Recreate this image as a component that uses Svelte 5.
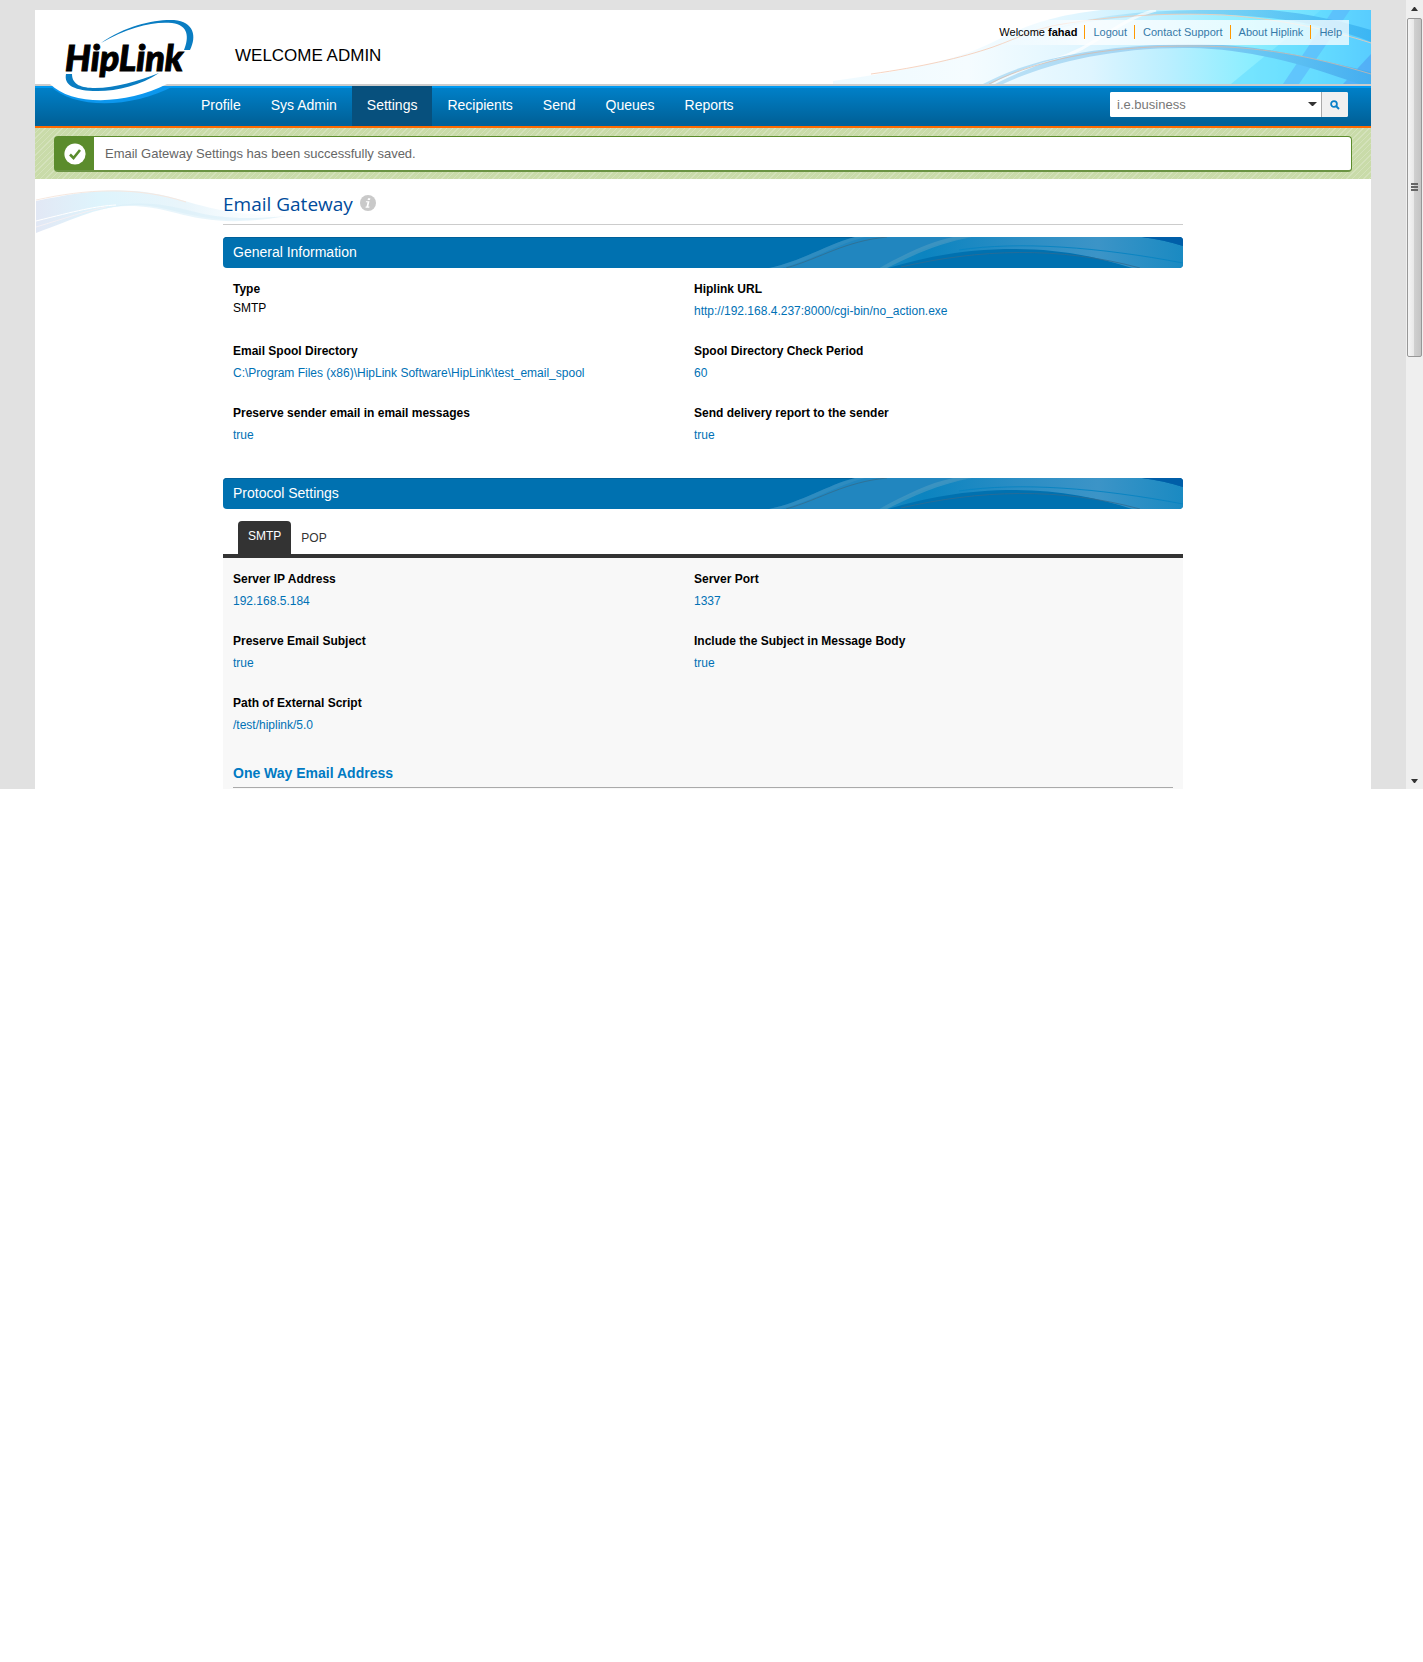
<script>
  const nav = ['Profile', 'Sys Admin', 'Settings', 'Recipients', 'Send', 'Queues', 'Reports'];
  const links = ['Logout', 'Contact Support', 'About Hiplink', 'Help'];
  const general = [
    { label: 'Type', value: 'SMTP', plain: true },
    { label: 'Hiplink URL', value: 'http://192.168.4.237:8000/cgi-bin/no_action.exe' },
    { label: 'Email Spool Directory', value: 'C:\\Program Files (x86)\\HipLink Software\\HipLink\\test_email_spool' },
    { label: 'Spool Directory Check Period', value: '60' },
    { label: 'Preserve sender email in email messages', value: 'true' },
    { label: 'Send delivery report to the sender', value: 'true' }
  ];
  const smtp = [
    { label: 'Server IP Address', value: '192.168.5.184' },
    { label: 'Server Port', value: '1337' },
    { label: 'Preserve Email Subject', value: 'true' },
    { label: 'Include the Subject in Message Body', value: 'true' },
    { label: 'Path of External Script', value: '/test/hiplink/5.0' }
  ];
</script>

{#snippet fields(items)}
  <dl class="fields">
    {#each items as f}
      <div class="field">
        <dt>{f.label}</dt>
        <dd class:plain={f.plain}>{f.value}</dd>
      </div>
    {/each}
  </dl>
{/snippet}

{#snippet bar(title)}
  <h2 class="bar">
    <svg class="bar-art" viewBox="0 0 414 31" preserveAspectRatio="none" aria-hidden="true">
      <defs>
        <linearGradient id="ribbon">
          <stop offset="0" stop-color="#1787c0" />
          <stop offset=".15" stop-color="#0b84c0" />
          <stop offset=".45" stop-color="#2a8dc4" />
          <stop offset=".72" stop-color="#3c94c7" />
          <stop offset="1" stop-color="#1a8ac2" />
        </linearGradient>
      </defs>
      <path d="M0 31C34 24 58 7 86 0H201C166 6 140 18 110 31Z" fill="#2186bf" />
      <path d="M110 31C140 16 170 5 201 0H373C388 2 402 5 414 9V31H363C330 20 290 12 246 12C195 12 156 20 119 31Z" fill="url(#ribbon)" />
      <path d="M110 31C138 16 160 5 184 0H203C170 6 142 19 118 31Z" fill="#4798c2" opacity=".7" />
      <path d="M0 31C34 24 58 7 86 0H96C66 8 42 24 12 31Z" fill="#4395c2" opacity=".4" />
      <path d="M17 31C52 21 76 4 118 0" fill="none" stroke="#2f7297" />
      <path d="M132 30C210 12 290 9 371 31" fill="none" stroke="#2f6b92" opacity=".8" />
      <path d="M190 13C250 4 330 10 414 26" fill="none" stroke="#0a84c2" />
      <path d="M373 0C388 2 402 5 414 9V0Z" fill="#005ea8" />
    </svg>
    <span>{title}</span>
  </h2>
{/snippet}

<div class="window">
  <div class="page">
    <header>
      <svg class="header-art" viewBox="0 0 540 74" preserveAspectRatio="none" aria-hidden="true">
        <defs>
          <linearGradient id="sky">
            <stop offset="0" stop-color="#eefaff" />
            <stop offset=".25" stop-color="#f5fcff" />
            <stop offset=".48" stop-color="#def5ff" />
            <stop offset=".62" stop-color="#bbefff" />
            <stop offset=".78" stop-color="#8aeeff" />
            <stop offset=".9" stop-color="#6fe0ff" />
            <stop offset="1" stop-color="#58c4ff" />
          </linearGradient>
          <linearGradient id="band">
            <stop offset="0" stop-color="#b8e0f6" stop-opacity=".9" />
            <stop offset=".45" stop-color="#9ed2f2" />
            <stop offset=".75" stop-color="#62c4f3" />
            <stop offset="1" stop-color="#45aef0" />
          </linearGradient>
          <linearGradient id="crest">
            <stop offset="0" stop-color="#b4e6fa" stop-opacity=".2" />
            <stop offset=".4" stop-color="#7ed0f4" />
            <stop offset="1" stop-color="#34b0f0" />
          </linearGradient>
        </defs>
        <path d="M2 71C80 60 120 50 149 38C180 25 200 8 270 0H540V74H2Z" fill="url(#sky)" />
        <path d="M400 74L490 0H540V74Z" fill="#58d8ff" opacity=".45" />
        <path d="M452 74L502 0H519L468 74Z" fill="#5ab4fa" opacity=".6" />
        <path d="M512 74L540 44V74Z" fill="#4f9cf2" opacity=".6" />
        <path d="M220 20C270 2 330 0 392 0H440C480 4 510 11 540 20V32C490 12 430 4 360 4C310 4 260 10 220 20Z" fill="url(#crest)" opacity=".8" />
        <path d="M222 50C265 38 285 10 325 0" fill="none" stroke="#fff" stroke-width="3" opacity=".7" />
        <path d="M152 74C200 48 270 35 359 34C430 34 480 48 540 62V74H528C470 54 420 39 359 38C280 37 215 54 172 74H164C200 56 230 46 262 42C220 48 190 58 160 74Z" fill="url(#band)" />
        <path d="M40 64C90 57 130 48 162 37C190 27 200 20 226 15C290 4 350 3 392 5C450 9 500 20 540 33" fill="none" stroke="#f5c9b2" opacity=".8" />
        <path d="M158 74C215 45 290 36 359 36C430 36 480 46 540 64" fill="none" stroke="#dcb8a4" opacity=".7" />
      </svg>
      <p class="welcome">WELCOME ADMIN</p>
      <ul class="account">
        <li class="user">Welcome <strong>fahad</strong></li>
        {#each links as l}
          <li><a href="#top">{l}</a></li>
        {/each}
      </ul>
    </header>

    <div class="navbar">
      <svg class="logo" viewBox="0 0 160 96" role="img" aria-label="HipLink">
        <path d="M0 75C24 98 80 98 124 75Z" fill="#0c97ee" />
        <path d="M0 73C22 95 76 94 117 73V60H0Z" fill="#fff" />
        <path d="M51 32C76 14 106 8 124 9C144 11 147 25 140 39L134 39C139 27 139 14 122 12C104 10 78 16 51 32Z" fill="#0a7dc2" />
        <path d="M16 63H22C22 74 32 77 45 77C66 77 88 70 109 62C90 75 64 81 43 80C22 79 14 73 16 63Z" fill="#0a7dc2" />
        <text x="15" y="60">HipLink</text>
      </svg>
      <nav>
        {#each nav as n}
          <a href="#top" class:active={n === 'Settings'}>{n}</a>
        {/each}
      </nav>
      <form class="search">
        <input type="text" aria-label="Search" placeholder="i.e.business" />
        <button type="button" class="drop" aria-label="Search options">
          <svg width="9" height="5" viewBox="0 0 9 5"><path d="M0 0H9L5 4H4Z" fill="#333" /></svg>
        </button>
        <button type="button" class="go" aria-label="Go">
          <svg width="10" height="10" viewBox="0 0 10 10" fill="none" stroke="#0a80c8"><circle cx="4" cy="4" r="2.9" stroke-width="1.8" /><path d="M6 6L9 9" stroke-width="2" /></svg>
        </button>
      </form>
    </div>

    <div class="notice">
      <div class="alert" role="status">
        <span class="tick">
          <svg width="22" height="22" viewBox="0 0 22 22"><circle cx="11" cy="11" r="10.6" fill="#fff" /><path d="M6 11.5L9.5 15L16 7" fill="none" stroke="#5b8c2c" stroke-width="2.6" /></svg>
        </span>
        <p>Email Gateway Settings has been successfully saved.</p>
      </div>
    </div>

    <main>
      <svg class="swoosh" width="270" height="50" viewBox="0 0 270 50" aria-hidden="true">
        <defs>
          <linearGradient id="wave">
            <stop offset="0" stop-color="#e2e8f5" />
            <stop offset=".25" stop-color="#def4fc" />
            <stop offset=".6" stop-color="#e9f5fb" />
            <stop offset="1" stop-color="#f0faff" stop-opacity="0" />
          </linearGradient>
        </defs>
        <path d="M0 12C40 4 75 -2 115 4C150 9 180 28 250 26C200 36 170 30 130 20C80 8 50 26 0 44Z" fill="url(#wave)" />
        <path d="M60 22C95 10 125 14 155 22C180 29 210 31 250 27C200 36 170 32 140 24C110 16 85 14 60 22Z" fill="#d9eff9" opacity=".6" />
        <path d="M0 11C50 0 100 -3 150 13" fill="none" stroke="#f6e8e0" />
        <path d="M0 32C40 22 60 17 80 16" fill="none" stroke="#fff" />
        <path d="M0 38C30 29 50 22 70 18" fill="none" stroke="#f4f0f4" />
      </svg>
      <div class="content">
        <div class="title">
          <h1>Email Gateway</h1>
          <svg width="16" height="16" viewBox="0 0 16 16" role="img" aria-label="Info"><circle cx="8" cy="8" r="8" fill="#c9c9c9" /><path d="M8 3.2h2.4l-.4 1.9H7.6ZM6 6.2h3.5L8.3 11.6h1.2l-.2 1.1H5.5l.2-1.1h.8l1-4.3H5.8Z" fill="#fff" /></svg>
        </div>

        <section>
          {@render bar('General Information')}
          {@render fields(general)}
        </section>

        <section>
          {@render bar('Protocol Settings')}
          <div class="tabs" role="tablist">
            <button type="button" role="tab" aria-selected="true" class="on">SMTP</button>
            <button type="button" role="tab" aria-selected="false">POP</button>
          </div>
          <div class="panel">
            {@render fields(smtp)}
            <h3>One Way Email Address</h3>
          </div>
        </section>
      </div>
    </main>
  </div>

  <div class="scroll" aria-hidden="true">
    <svg class="cap" width="17" height="18" viewBox="0 0 17 18"><path d="M8 7h1l3 4H5Z" fill="#333" /></svg>
    <div class="track">
      <div class="thumb"><i></i><i></i><i></i></div>
    </div>
    <svg class="cap" width="17" height="18" viewBox="0 0 17 18"><path d="M5 8h7l-3 4H8Z" fill="#333" /></svg>
  </div>
</div>

<style>
  :global(body) { background: #fff; }
  .window {
    display: flex;
    background: #e1e1e1;
    font: 12px/16px "Liberation Sans", Arial, sans-serif;
    color: #000;
  }
  h1, h2, h3, p, ul, dl, dd { margin: 0; padding: 0; }
  a { text-decoration: none; }
  button { font: inherit; border: 0; padding: 0; background: none; }
  .page { flex: 1; margin: 10px 35px 0; background: #fff; min-width: 0; }

  header {
    position: relative;
    display: flex;
    justify-content: space-between;
    align-items: flex-start;
    height: 74px;
    padding: 0 22px 0 200px;
    border-bottom: 2px solid #ccc;
  }
  .header-art { position: absolute; right: 0; top: 0; width: 540px; height: 74px; }
  .welcome { font-size: 17px; line-height: 20px; margin-top: 36px; }
  .account {
    position: relative;
    display: flex;
    align-items: flex-start;
    list-style: none;
    height: 20px;
    padding-top: 5px;
    margin-top: 10px;
    background: linear-gradient(90deg, rgba(255,255,255,0), rgba(255,255,255,.75) 25%);
    font-size: 11px;
    line-height: 14px;
  }
  .account li { padding: 0 7px 0 8px; border-left: 1px solid #f90; }
  .account .user { border-left: 0; }
  .account a { color: #3579a8; }

  .navbar {
    position: relative;
    display: flex;
    align-items: stretch;
    height: 40px;
    padding: 0 23px 0 151px;
    background: linear-gradient(#0099f0 2px, #0080c8 2px, #00629a 90%);
    border-bottom: 2px solid #ff6a00;
  }
  .logo { position: absolute; left: 15px; top: -75px; width: 160px; height: 96px; }
  .logo text { font: italic 900 36px Lato, sans-serif; fill: #000; stroke: #000; stroke-width: 1px; }
  nav { display: flex; }
  nav a { padding: 10px 15px 0; color: #fff; font-size: 14px; line-height: 18px; }
  nav .active { background: #07507d; }
  .search {
    display: flex;
    height: 25px;
    margin: 6px 0 0 auto;
    background: #fff;
    border-radius: 2px;
    overflow: hidden;
  }
  .search input { width: 193px; border: 0; padding: 0 7px; background: #fff; font: 13px "Liberation Sans", Arial, sans-serif; outline: 0; box-sizing: border-box; }
  .search input::placeholder { color: #777; }
  .search button { display: flex; align-items: center; justify-content: center; }
  .search .drop { width: 18px; }
  .search .go { width: 27px; border-left: 1px solid #aaa; background: #f0f0f0; }

  .notice {
    padding: 8px 19px 7px;
    background: repeating-linear-gradient(135deg, #c9dba9 0 3px, #d4e2bb 3px 4px);
  }
  .alert {
    display: flex;
    background: #fff;
    border: 1px solid #5b8c2c;
    border-bottom: 2px solid #6b9444;
    border-radius: 4px;
    height: 33px;
  }
  .tick { display: flex; align-items: center; justify-content: center; width: 39px; background: #5b8c2c; }
  .alert p { padding-left: 11px; font-size: 13px; line-height: 33px; color: #666; }

  main { position: relative; }
  .swoosh { position: absolute; left: 1px; top: 10px; }
  .content { position: relative; max-width: 960px; margin: 0 auto; }
  .title { display: flex; gap: 7px; padding-top: 13px; height: 32px; border-bottom: 1px solid #ccc; margin-bottom: 12px; }
  .title svg { margin-top: 3px; }
  h1 { font: 400 19px/24px "Open Sans", sans-serif; color: #004b9b; }

  .bar {
    position: relative;
    height: 31px;
    border-radius: 4px;
    overflow: hidden;
    background: #0071b0;
    color: #fff;
    font-size: 14px;
    font-weight: 400;
    line-height: 31px;
    box-shadow: inset 0 1px #00609a;
  }
  .bar span { position: relative; padding-left: 10px; }
  .bar-art { position: absolute; right: 0; top: 0; width: 414px; height: 31px; }

  .fields { display: grid; grid-template-columns: 461px 1fr; padding: 12px 10px; }
  .field { height: 62px; }
  dt { font-weight: 700; line-height: 18px; }
  dd { line-height: 26px; color: #0071b5; }
  dd.plain { line-height: 20px; color: #000; }

  .tabs { display: flex; padding: 12px 15px 0; border-bottom: 4px solid #333; color: #333; }
  .tabs button { height: 33px; padding: 0 10px; font-size: 12px; line-height: 16px; color: #333; }
  .tabs .on { padding-bottom: 4px; background: #333; color: #fff; border-radius: 4px 4px 0 0; }
  .panel { background: #f8f8f8; padding-bottom: 1px; }
  .panel .fields { padding-bottom: 0; }
  h3 { margin: 0 10px; padding: 8px 0 5px; border-bottom: 1px solid #aaa; font-size: 14px; line-height: 18px; color: #007ac3; }

  .scroll { display: flex; flex-direction: column; width: 17px; background: #efefef; }
  .cap { display: block; }
  .track { flex: 1; }
  .thumb {
    display: flex;
    flex-direction: column;
    align-items: center;
    justify-content: center;
    gap: 1px;
    height: 45%;
    margin: 0 1px;
    border: 1px solid #979797;
    border-radius: 2px;
    box-sizing: border-box;
    background: linear-gradient(90deg, #f5f5f5, #e8e8e8 45%, #cfcfcf 50%, #c4c4c4);
  }
  .thumb i { width: 7px; height: 2px; background: #666; }
</style>
